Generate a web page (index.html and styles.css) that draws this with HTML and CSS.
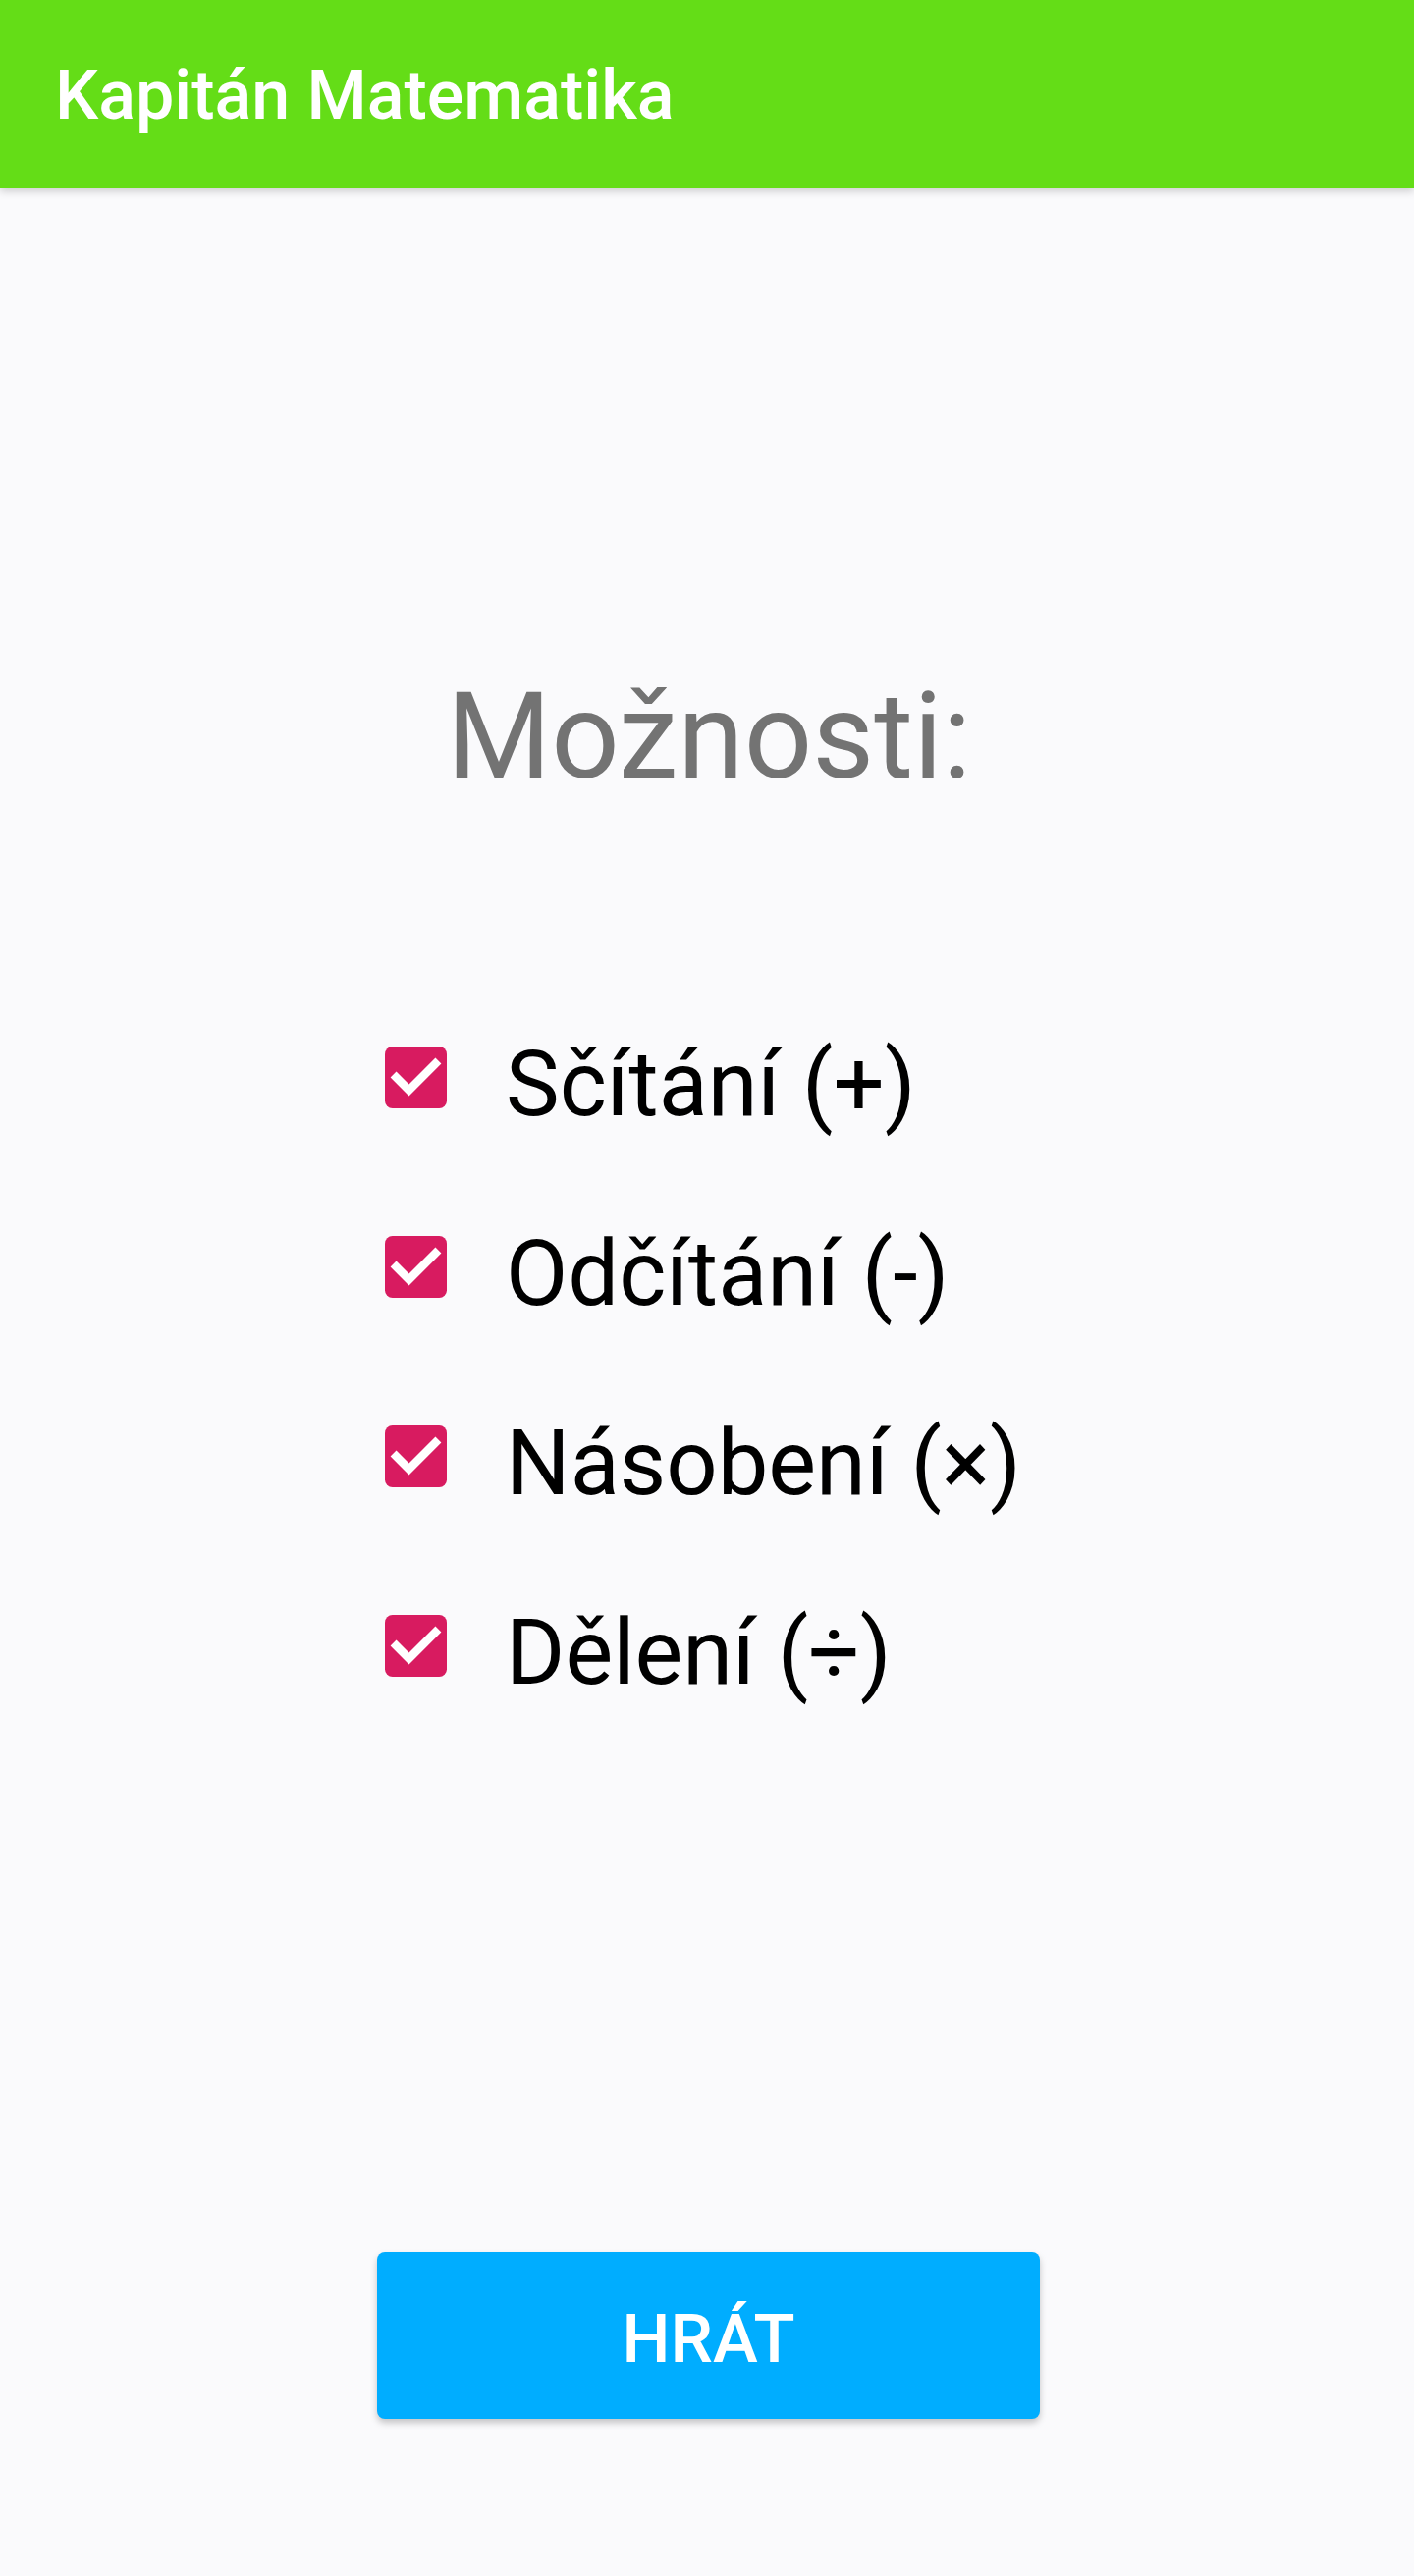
FILE: index.html
```html
<!DOCTYPE html>
<html lang="cs">
<head>
<meta charset="utf-8">
<title>Kapitán Matematika</title>
<link rel="stylesheet" href="styles.css">
</head>
<body>
<header class="appbar">
  <h1 class="appbar-title">Kapitán Matematika</h1>
</header>
<main class="content">
  <h2 class="heading">Možnosti:</h2>
  <ul class="options">
    <li class="option">
      <svg class="checkbox" viewBox="3 3 18 18" aria-hidden="true"><rect x="3" y="3" width="18" height="18" rx="2.2" fill="#d81b60"/><path d="M10 17.4l-5.4-5.4 1.7-1.7L10 14l7.7-7.7 1.7 1.7z" fill="#ffffff"/></svg>
      <span class="label">Sčítání (+)</span>
    </li>
    <li class="option">
      <svg class="checkbox" viewBox="3 3 18 18" aria-hidden="true"><rect x="3" y="3" width="18" height="18" rx="2.2" fill="#d81b60"/><path d="M10 17.4l-5.4-5.4 1.7-1.7L10 14l7.7-7.7 1.7 1.7z" fill="#ffffff"/></svg>
      <span class="label">Odčítání (-)</span>
    </li>
    <li class="option">
      <svg class="checkbox" viewBox="3 3 18 18" aria-hidden="true"><rect x="3" y="3" width="18" height="18" rx="2.2" fill="#d81b60"/><path d="M10 17.4l-5.4-5.4 1.7-1.7L10 14l7.7-7.7 1.7 1.7z" fill="#ffffff"/></svg>
      <span class="label">Násobení (×)</span>
    </li>
    <li class="option">
      <svg class="checkbox" viewBox="3 3 18 18" aria-hidden="true"><rect x="3" y="3" width="18" height="18" rx="2.2" fill="#d81b60"/><path d="M10 17.4l-5.4-5.4 1.7-1.7L10 14l7.7-7.7 1.7 1.7z" fill="#ffffff"/></svg>
      <span class="label">Dělení (÷)</span>
    </li>
  </ul>
  <button class="play" type="button">HRÁT</button>
</main>
</body>
</html>
```
FILE: styles.css
```css
* { box-sizing: border-box; }

html, body {
  margin: 0;
  padding: 0;
}

body {
  background: #fafafc;
  font-family: Roboto, "Noto Sans", "Liberation Sans", sans-serif;
  width: 1440px;
  min-height: 2624px;
}

.appbar {
  height: 192px;
  background: #64dd17;
  display: flex;
  align-items: center;
  padding-left: 56px;
  box-shadow: 0 3px 8px rgba(0, 0, 0, 0.18);
  position: relative;
  z-index: 1;
}

.appbar-title {
  margin: 0;
  color: #ffffff;
  font-size: 70px;
  font-weight: 500;
  line-height: 1;
  padding-top: 2px;
}

.content {
  display: flex;
  flex-direction: column;
  align-items: center;
}

.heading {
  margin: 498px 0 0 0;
  font-size: 122px;
  font-weight: 400;
  line-height: 1;
  color: #737373;
  padding-left: 4px;
}

.options {
  list-style: none;
  margin: 189px 0 0 0;
  padding: 0;
  display: flex;
  flex-direction: column;
  align-self: flex-start;
  margin-left: 392px;
}

.option {
  height: 193px;
  display: flex;
  align-items: center;
  gap: 60px;
}

.checkbox {
  width: 63px;
  height: 63px;
  flex: none;
  display: block;
}

.label {
  font-size: 92px;
  line-height: 1;
  color: #000000;
  padding-top: 14px;
}

.play {
  margin-top: 521px;
  width: 675px;
  height: 170px;
  border: none;
  border-radius: 8px;
  background: #00adff;
  color: #ffffff;
  font-family: Roboto, "Noto Sans", "Liberation Sans", sans-serif;
  font-size: 69px;
  font-weight: 500;
  line-height: 1;
  padding: 6px 0 0 0;
  box-shadow: 0 4px 7px rgba(0, 0, 0, 0.22);
  margin-left: 3px;
}
```
